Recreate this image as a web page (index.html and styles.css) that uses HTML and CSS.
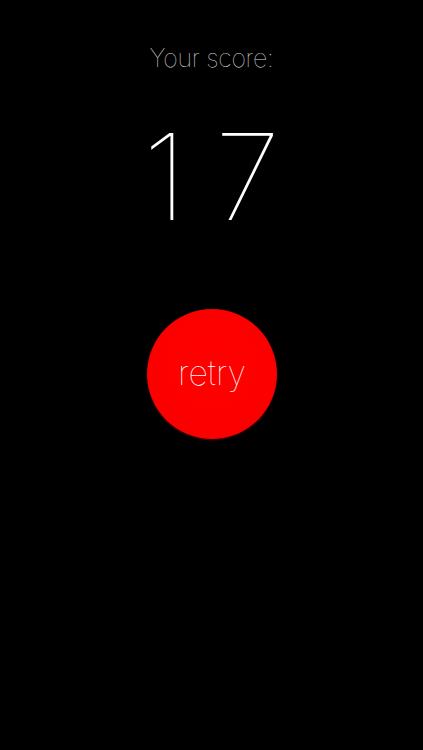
FILE: index.html
```html
<!DOCTYPE html>
<html>
<head>
<meta charset="utf-8">
<link rel="stylesheet" href="styles.css">
</head>
<body>
<main class="screen">
  <div class="label">Your score:</div>
  <div class="score">17</div>
  <button class="retry">retry</button>
</main>
</body>
</html>
```
FILE: styles.css
```css
html, body {
  margin: 0;
  padding: 0;
  background: #000;
}
.screen {
  width: 423px;
  height: 750px;
  display: flex;
  flex-direction: column;
  align-items: center;
  font-family: "Inter", "Lato", sans-serif;
  font-weight: 100;
  color: #fff;
}
.label {
  margin-top: 42px;
  font-size: 25px;
  line-height: 32px;
  color: #d8d8d8;
  letter-spacing: -0.3px;
}
.score {
  margin-top: 40px;
  font-size: 120px;
  line-height: 126px;
  letter-spacing: 28px;
  padding-left: 28px;
}
.retry {
  margin-top: 69px;
  width: 130px;
  height: 130px;
  border-radius: 50%;
  border: none;
  background: radial-gradient(circle at 50% 42%, #ff0000 0%, #fb0000 75%, #d80000 100%);
  box-shadow: 0 1px 2px rgba(120, 0, 0, 0.6);
  color: #fff;
  font-family: "Inter", "Lato", sans-serif;
  font-weight: 100;
  font-size: 34px;
  padding: 0 0 4px 0;
  margin-left: 1px;
}
```
